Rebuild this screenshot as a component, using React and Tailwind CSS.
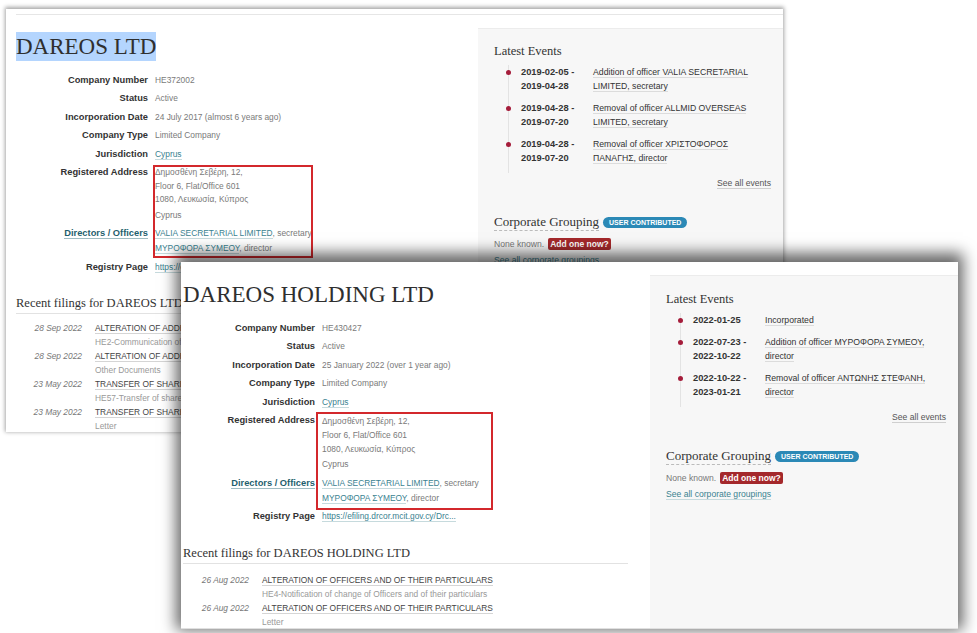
import React from "react";

const sans = "font-['Liberation_Sans',Arial,sans-serif]";
const serif = "font-['Liberation_Serif','Times_New_Roman',serif]";

const companies = [
  {
    name: "DAREOS LTD",
    number: "HE372002",
    date: "24 July 2017 (almost 6 years ago)",
    events: [
      { dates: ["2019-02-05 -", "2019-04-28"], text: ["Addition of officer VALIA SECRETARIAL", "LIMITED, secretary"] },
      { dates: ["2019-04-28 -", "2019-07-20"], text: ["Removal of officer ALLMID OVERSEAS", "LIMITED, secretary"] },
      { dates: ["2019-04-28 -", "2019-07-20"], text: ["Removal of officer ΧΡΙΣΤΟΦΟΡΟΣ", "ΠΑΝΑΓΗΣ, director"] },
    ],
    filings: [
      { date: "28 Sep 2022", title: "ALTERATION OF ADDRESS OF REGISTERED OFFICE", sub: "HE2-Communication of change of registered office" },
      { date: "28 Sep 2022", title: "ALTERATION OF ADDRESS OF REGISTERED OFFICE", sub: "Other Documents" },
      { date: "23 May 2022", title: "TRANSFER OF SHARES", sub: "HE57-Transfer of shares" },
      { date: "23 May 2022", title: "TRANSFER OF SHARES", sub: "Letter" },
    ],
  },
  {
    name: "DAREOS HOLDING LTD",
    number: "HE430427",
    date: "25 January 2022 (over 1 year ago)",
    events: [
      { dates: ["2022-01-25"], text: ["Incorporated"] },
      { dates: ["2022-07-23 -", "2022-10-22"], text: ["Addition of officer ΜΥΡΟΦΟΡΑ ΣΥΜΕΟΥ,", "director"] },
      { dates: ["2022-10-22 -", "2023-01-21"], text: ["Removal of officer ΑΝΤΩΝΗΣ ΣΤΕΦΑΝΗ,", "director"] },
    ],
    filings: [
      { date: "26 Aug 2022", title: "ALTERATION OF OFFICERS AND OF THEIR PARTICULARS", sub: "HE4-Notification of change of Officers and of their particulars" },
      { date: "26 Aug 2022", title: "ALTERATION OF OFFICERS AND OF THEIR PARTICULARS", sub: "Letter" },
    ],
  },
];

const Row = ({ label, children, teal }) => (
  <div className="flex mb-[5.5px]">
    <div className="w-[132px] shrink-0 text-right font-bold text-[9.3px] leading-[13px]">
      {teal ? (
        <span className="text-[#1f5f6e] border-b border-[#9fbcc2]">{label}</span>
      ) : (
        <span className="text-[#333]">{label}</span>
      )}
    </div>
    <div className="ml-[7px] text-[8.4px] leading-[13px] text-[#7a7a7a] whitespace-nowrap">{children}</div>
  </div>
);

const Link = ({ children }) => (
  <span className="text-[#3a8290] border-b border-[#c6dadd]">{children}</span>
);

const Details = ({ c, addrLh }) => (
  <div>
    <Row label="Company Number">{c.number}</Row>
    <Row label="Status">Active</Row>
    <Row label="Incorporation Date">{c.date}</Row>
    <Row label="Company Type">Limited Company</Row>
    <Row label="Jurisdiction">
      <Link>Cyprus</Link>
    </Row>
    <Row label="Registered Address">
      <div className={addrLh}>Δημοσθένη Σεβέρη, 12,</div>
      <div className={addrLh}>Floor 6, Flat/Office 601</div>
      <div className={addrLh}>1080, Λευκωσία, Κύπρος</div>
      <div className="mt-[2px]">Cyprus</div>
    </Row>
    <Row label="Directors / Officers" teal>
      <div>
        <Link>VALIA SECRETARIAL LIMITED</Link>, secretary
      </div>
      <div className="mt-[2px]">
        <Link>ΜΥΡΟΦΟΡΑ ΣΥΜΕΟΥ</Link>, director
      </div>
    </Row>
    <Row label="Registry Page">
      <Link>https://efiling.drcor.mcit.gov.cy/Drc...</Link>
    </Row>
  </div>
);

const Filings = ({ c, headMt, rowsMt }) => (
  <div className={headMt}>
    <div className={`${serif} text-[12.5px] leading-[16px] text-[#333] pb-[2px] border-b border-[#e2e2e2] whitespace-nowrap`}>
      Recent filings for {c.name}
    </div>
    <div className={rowsMt}>
      {c.filings.map((f, i) => (
        <div key={i} className="flex text-[8.4px] leading-[14px] whitespace-nowrap">
          <div className="w-[66px] shrink-0 text-right italic text-[#777]">{f.date}</div>
          <div className="ml-[13px]">
            <div>
              <span className="text-[#444] border-b border-[#d5d5d5]">{f.title}</span>
            </div>
            <div className="text-[#999]">{f.sub}</div>
          </div>
        </div>
      ))}
    </div>
  </div>
);

const Panel = ({ c, cls }) => (
  <div className={`${cls} shrink-0 bg-[#f7f7f7] border-t border-[#ececec] pl-[16px] pr-[12px] pb-[29px]`}>
    <div className={`${serif} text-[12.5px] leading-[16px] text-[#333]`}>Latest Events</div>
    <div className="mt-[6px] ml-[14px] border-l border-[#e3e3e3] pb-[8px]">
      {c.events.map((e, i) => (
        <div key={i} className="relative flex mb-[8px] last:mb-0">
          <span className="absolute -left-[3px] top-[4.5px] w-[5px] h-[5px] rounded-full bg-[#a51d3b]" />
          <div className="ml-[12px] w-[72px] shrink-0 font-bold text-[9.3px] leading-[14px] text-[#333]">
            {e.dates.map((d, j) => (
              <div key={j}>{d}</div>
            ))}
          </div>
          <div className="text-[8.7px] leading-[14px] text-[#333] whitespace-nowrap">
            {e.text.map((t, j) => (
              <div key={j}>
                <span className="border-b border-[#dcdcdc]">{t}</span>
              </div>
            ))}
          </div>
        </div>
      ))}
    </div>
    <div className="mt-[4px] text-right text-[8.6px] leading-[12px] text-[#555]">
      <span className="border-b border-[#cfcfcf]">See all events</span>
    </div>
    <div className="mt-[25px] flex items-center">
      <span className={`${serif} text-[13px] leading-[16px] text-[#333] border-b border-dashed border-[#bbb]`}>
        Corporate Grouping
      </span>
      <span className="ml-[4px] h-[11px] px-[6px] rounded-full bg-[#2b89b6] text-white font-bold text-[7px] leading-[11px]">
        USER CONTRIBUTED
      </span>
    </div>
    <div className="mt-[6px] flex items-center text-[8.6px] leading-[14px] text-[#777]">
      None known.
      <span className="ml-[4px] h-[12px] px-[2px] rounded-[2px] bg-[#a4282b] text-white font-bold text-[8.5px] leading-[12px]">
        Add one now?
      </span>
    </div>
    <div className="mt-[2px] text-[8.6px] leading-[14px]">
      <Link>See all corporate groupings</Link>
    </div>
  </div>
);

export default function App() {
  const [a, b] = companies;
  return (
    <div className={`${sans} relative w-[977px] h-[633px] bg-white overflow-hidden`}>
      {/* first screenshot */}
      <div className="absolute left-[6px] top-[9px] w-[777px] h-[423px] bg-white overflow-hidden shadow-[0_-1px_4px_1px_rgba(0,0,0,0.35)]">
        <div className="ml-[10px] mt-[5px] border-t border-[#e6e6e6]" />
        <div className="flex">
          <div className="w-[446px] ml-[10px] shrink-0">
            <div className="mt-[17px]">
              <span className={`${serif} inline-block bg-[#b4d5fe] text-[23px] leading-[29px] text-[#2f2f2f]`}>
                {a.name}
              </span>
            </div>
            <div className="mt-[12.5px]">
              <Details c={a} addrLh="leading-[13.5px]" />
            </div>
            <Filings c={a} headMt="mt-[21px]" rowsMt="mt-[7px]" />
          </div>
          <Panel c={a} cls="ml-auto w-[305px] mt-[13px] pt-[14px]" />
        </div>
        <div className="absolute left-[147px] top-[156px] w-[160px] h-[93px] border-2 border-[#d3282c]" />
      </div>

      {/* second screenshot */}
      <div className="absolute left-[181px] top-[262px] w-[777px] h-[367px] bg-white overflow-hidden border-b border-[#e0e0e0] shadow-[0_-4px_14px_5px_rgba(0,0,0,0.6)]">
        <div className="flex">
          <div className="w-[445px] ml-[2px] shrink-0">
            <div className="mt-[17.5px]">
              <span className={`${serif} inline-block text-[23px] leading-[29px] text-[#2f2f2f] whitespace-nowrap`}>
                {b.name}
              </span>
            </div>
            <div className="mt-[13px]">
              <Details c={b} addrLh="leading-[14px]" />
            </div>
            <Filings c={b} headMt="mt-[22px]" rowsMt="mt-[9px]" />
          </div>
          <Panel c={b} cls="ml-auto w-[308px] mt-[13px] pt-[15px]" />
        </div>
        <div className="absolute left-[135px] top-[150px] w-[177px] h-[98px] border-2 border-[#d3282c]" />
      </div>
    </div>
  );
}
